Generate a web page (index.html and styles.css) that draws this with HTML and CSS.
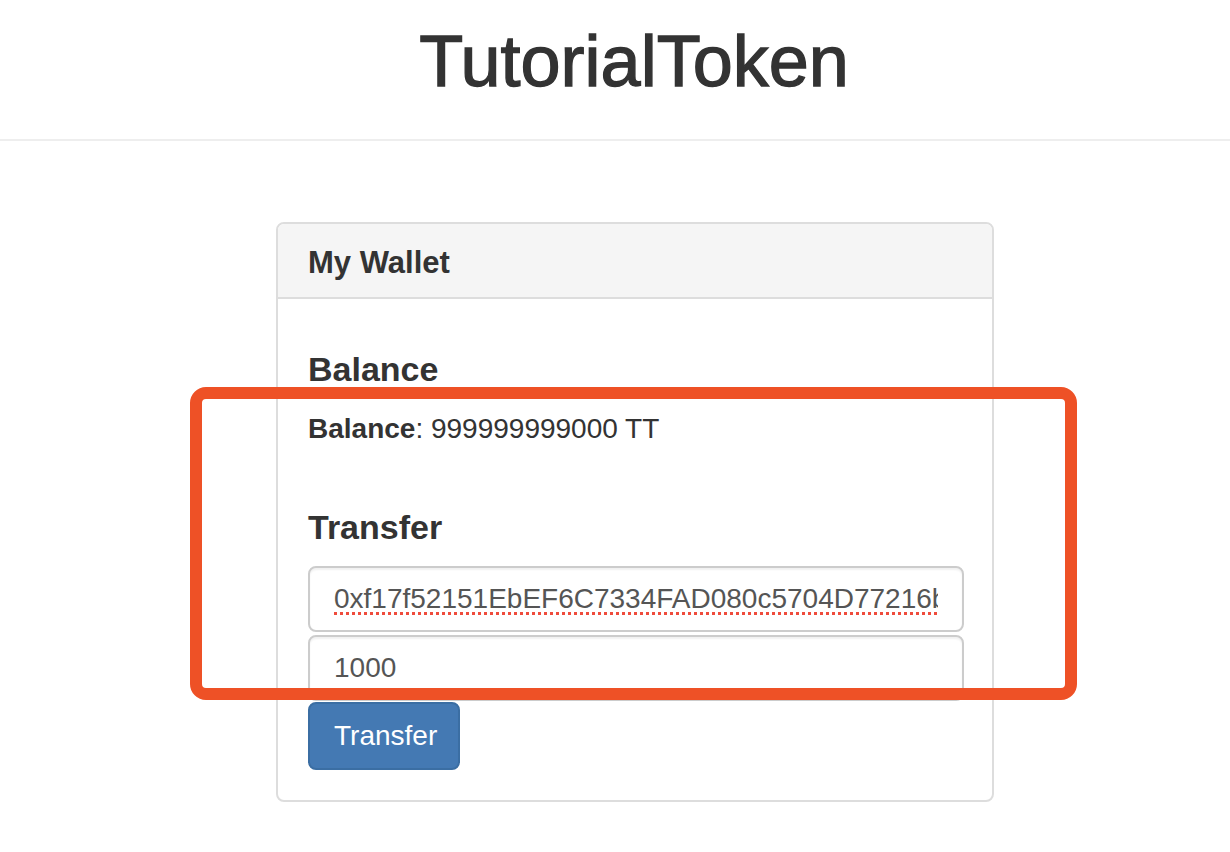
FILE: index.html
```html
<!DOCTYPE html>
<html lang="en">
<head>
<meta charset="utf-8">
<title>TutorialToken</title>
<link rel="stylesheet" href="styles.css">
</head>
<body>
<header class="page-header">
  <h1 class="title">TutorialToken</h1>
</header>
<main class="container">
  <section class="panel">
    <div class="panel-heading">
      <h3 class="panel-title">My Wallet</h3>
    </div>
    <div class="panel-body">
      <h4 class="section-title">Balance</h4>
      <p class="balance"><strong>Balance</strong>: <span class="amount">999999999000</span> TT</p>
      <h4 class="section-title transfer-title">Transfer</h4>
      <form class="transfer-form">
        <input class="form-control address" type="text" spellcheck="false" value="0xf17f52151EbEF6C7334FAD080c5704D77216b732">
        <input class="form-control" type="text" spellcheck="false" value="1000">
        <button class="btn btn-primary" type="button">Transfer</button>
      </form>
    </div>
  </section>
</main>
<div class="highlight"></div>
</body>
</html>
```
FILE: styles.css
```css
html, body {
  margin: 0;
  padding: 0;
  background: #ffffff;
  font-family: "Liberation Sans", Arial, Helvetica, sans-serif;
  color: #333333;
}

.page-header {
  padding: 22px 0 38px 38px;
  border-bottom: 2px solid #eeeeee;
  text-align: center;
}

.title {
  margin: 0;
  font-size: 72px;
  line-height: 79px;
  font-weight: 500;
  color: #333333;
  -webkit-text-stroke: 1.3px #333333;
}

.container {
  padding: 81px 0 60px 276px;
}

.panel {
  width: 714px;
  border: 2px solid #dddddd;
  border-radius: 8px;
  background: #ffffff;
  overflow: hidden;
}

.panel-heading {
  background: #f5f5f5;
  padding: 21px 30px 17px;
  border-bottom: 2px solid #dddddd;
}

.panel-title {
  margin: 0;
  font-size: 31px;
  line-height: 35px;
  font-weight: bold;
  color: #333333;
}

.panel-body {
  padding: 30px;
}

.section-title {
  margin: 20px 0 20px;
  font-size: 34px;
  line-height: 40px;
  font-weight: bold;
  color: #333333;
}

.balance-title {
  margin-top: 21px;
}

.transfer-title {
  margin-top: 58px;
  margin-bottom: 19px;
}

.balance {
  margin: 0;
  font-size: 28px;
  line-height: 40px;
}

.transfer-form {
  display: flex;
  flex-direction: column;
  align-items: flex-start;
}

.form-control {
  box-sizing: border-box;
  width: 656px;
  height: 66px;
  margin: 0 0 3px;
  padding: 0 24px;
  border: 2px solid #cccccc;
  border-radius: 8px;
  font-family: "Liberation Sans", Arial, Helvetica, sans-serif;
  font-size: 28px;
  color: #555555;
  background: #ffffff;
  box-shadow: inset 0 2px 2px rgba(0, 0, 0, 0.06);
  outline: none;
}

.address {
  text-decoration: underline dotted #ef4c3c;
  text-decoration-thickness: 3px;
  text-underline-offset: 4px;
}

.btn {
  box-sizing: border-box;
  width: 152px;
  height: 68px;
  margin-top: -2px;
  padding: 0 24px;
  border: 2px solid #3b6ea3;
  border-radius: 8px;
  background: #4479b3;
  color: #ffffff;
  font-family: "Liberation Sans", Arial, Helvetica, sans-serif;
  font-size: 28px;
  line-height: 40px;
  cursor: pointer;
}

.highlight {
  position: absolute;
  left: 190px;
  top: 387px;
  width: 863px;
  height: 289px;
  border: 12px solid #ee5126;
  border-radius: 16px;
  pointer-events: none;
}
```
